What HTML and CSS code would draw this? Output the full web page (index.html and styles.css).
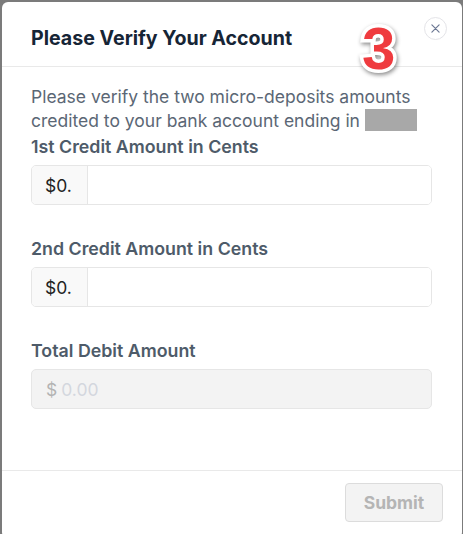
FILE: index.html
```html
<!DOCTYPE html>
<html lang="en">
<head>
    <meta charset="UTF-8">
    <meta name="viewport" content="width=device-width, initial-scale=1.0">
    <title>Please Verify Your Account</title>
    <link rel="stylesheet" href="styles.css">
</head>
<body>
    <div class="modal">
        <header class="modal-header">
            <h2>Please Verify Your Account</h2>
            <button class="close-button" aria-label="Close">
                <svg width="9" height="9" viewBox="0 0 10 10"><path d="M1 1 L9 9 M9 1 L1 9" stroke="#6b7793" stroke-width="1.3" stroke-linecap="round"/></svg>
            </button>
        </header>
        <span class="step-badge">3</span>

        <div class="modal-body">
            <p class="intro">Please verify the two micro-deposits amounts credited to your bank account ending in <span class="masked"></span></p>

            <div class="field">
                <label for="credit1">1st Credit Amount in Cents</label>
                <div class="input-group">
                    <span class="prefix">$0.</span>
                    <input type="text" id="credit1">
                </div>
            </div>

            <div class="field">
                <label for="credit2">2nd Credit Amount in Cents</label>
                <div class="input-group">
                    <span class="prefix">$0.</span>
                    <input type="text" id="credit2">
                </div>
            </div>

            <div class="field">
                <label for="total">Total Debit Amount</label>
                <div class="total-box"><span class="dollar">$</span> <span class="amount">0.00</span></div>
            </div>
        </div>

        <footer class="modal-footer">
            <button class="submit-button" disabled>Submit</button>
        </footer>
    </div>
</body>
</html>
```

FILE: styles.css
```css
/* Basic styling */
* { box-sizing: border-box; margin: 0; padding: 0; }
html, body { height: 100%; }
body { font-family: Inter, "Noto Sans", sans-serif; background-color: #7b7b7b; padding: 2px 1px 0 2px; overflow: hidden; }
.modal { position: relative; background: #fff; border-radius: 6px; height: 536px; }

.modal-header { padding: 24px 30px 16px 29px; border-bottom: 1px solid #e9e9e9; }
.modal-header h2 { font-size: 19.6px; line-height: 24px; font-weight: 700; color: #162536; }
.close-button { position: absolute; top: 15px; right: 15px; width: 23px; height: 23px; border-radius: 50%; border: 1px solid #e4e4e8; background: #fff; display: flex; align-items: center; justify-content: center; cursor: pointer; }

.step-badge { position: absolute; left: 360px; top: 13px; font-family: "Liberation Sans", Arial, sans-serif; font-weight: 700; font-size: 60px; line-height: 68px; color: #ef3b3f; -webkit-text-stroke: 7px #fff; paint-order: stroke fill; filter: drop-shadow(1px 2px 2px rgba(0, 0, 0, 0.45)); }

.modal-body { padding: 18px 30px 0 29px; height: 403px; }
.intro { font-size: 17.5px; line-height: 24px; color: #5b6775; }
.masked { display: inline-block; width: 52px; height: 22px; background: #a8a8a8; vertical-align: -4px; }

.field { margin-bottom: 32px; }
.field:first-of-type { margin-top: 2px; }
.field label { display: block; font-size: 17.8px; line-height: 24px; font-weight: 600; color: #4e5b69; margin-bottom: 6px; }

.input-group { display: flex; height: 40px; border: 1px solid #e6e6e6; border-radius: 5px; overflow: hidden; }
.prefix { width: 56px; display: flex; align-items: center; padding-left: 13px; font-size: 17.5px; color: #222; background: #f9f9f9; border-right: 1px solid #e6e6e6; }
.input-group input { flex: 1; border: none; outline: none; font-family: inherit; font-size: 17px; padding: 0 12px; }

.total-box { height: 40px; border: 1px solid #e6e6e6; border-radius: 5px; background: #f3f3f3; display: flex; align-items: center; padding-left: 14px; font-size: 17.5px; }
.total-box .dollar { color: #b3b3b3; margin-right: 4px; }
.total-box .amount { color: #d3d7de; }

.modal-footer { border-top: 1px solid #e9e9e9; padding: 12px 19px 0; display: flex; justify-content: flex-end; }
.submit-button { width: 98px; height: 39px; border: 1px solid #dcdcdc; border-radius: 4px; background: #f3f3f3; color: #b5b5b5; font-family: inherit; font-size: 17.5px; font-weight: 700; }
```
